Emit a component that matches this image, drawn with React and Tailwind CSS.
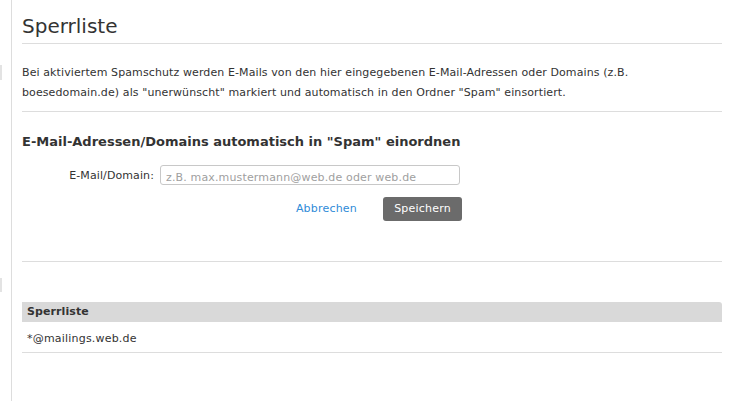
export default function App() {
  return (
    <div
      className="flex min-h-[401px] bg-white text-[#333] text-[11px] tracking-[0.1px]"
      style={{ fontFamily: '"DejaVu Sans", Verdana, sans-serif' }}
    >
      <div className="w-[11px] shrink-0 flex flex-col">
        <div className="mt-[65px] h-[15px] w-[2px] bg-[#e3e3e3]" />
        <div className="mt-[198px] h-[14px] w-[2px] bg-[#e3e3e3]" />
      </div>
      <div className="flex-1 border-l border-[#dddddd] pl-[10px] pr-[32px]">
        <div className="border-b border-[#dddddd] pt-[14px] pb-[5px]">
          <h1 className="text-[20px] leading-[24px] font-normal tracking-normal">Sperrliste</h1>
        </div>
        <div className="border-b border-[#dddddd] pt-[19px] pb-[8px]">
          <p className="leading-[20px]">
            Bei aktiviertem Spamschutz werden E-Mails von den hier eingegebenen E-Mail-Adressen oder Domains (z.B.
            <br />
            boesedomain.de) als "unerwünscht" markiert und automatisch in den Ordner "Spam" einsortiert.
          </p>
        </div>
        <div className="border-b border-[#dddddd] pt-[22px] pb-[40px]">
          <h2 className="text-[13px] leading-[16px] font-bold tracking-normal">
            E-Mail-Adressen/Domains automatisch in "Spam" einordnen
          </h2>
          <div className="mt-[15px] flex items-start">
            <label className="w-[132px] text-right leading-[18px] pt-[2px]">E-Mail/Domain:</label>
            <input
              type="text"
              placeholder="z.B. max.mustermann@web.de oder web.de"
              className="ml-[6px] box-border h-[20px] w-[300px] rounded-[3px] border border-[#c8c8c8] pl-[5px] pt-[4px] pb-0 text-[11px] leading-[14px] tracking-[0.15px] text-[#333] outline-none placeholder:text-[#a0a0a0]"
              style={{ fontFamily: '"DejaVu Sans", Verdana, sans-serif' }}
            />
          </div>
          <div className="mt-[12px] flex w-[440px] items-center justify-end gap-[26px]">
            <a className="text-[#2f8bd8] cursor-pointer tracking-[0.2px]">Abbrechen</a>
            <button
              className="h-[24px] w-[79px] rounded-[3px] bg-[#6b6b6b] text-[11px] tracking-[0.2px] text-white"
              style={{ fontFamily: '"DejaVu Sans", Verdana, sans-serif' }}
            >
              Speichern
            </button>
          </div>
        </div>
        <div className="mt-[40px]">
          <div className="h-[20px] rounded-tr-[3px] bg-[#d9d9d9] pl-[5px] font-bold leading-[20px]">
            Sperrliste
          </div>
          <div className="border-b border-[#dddddd] pl-[5px] pt-[7px] pb-[3px] leading-[20px] tracking-[0.2px]">
            *@mailings.web.de
          </div>
        </div>
      </div>
    </div>
  );
}
